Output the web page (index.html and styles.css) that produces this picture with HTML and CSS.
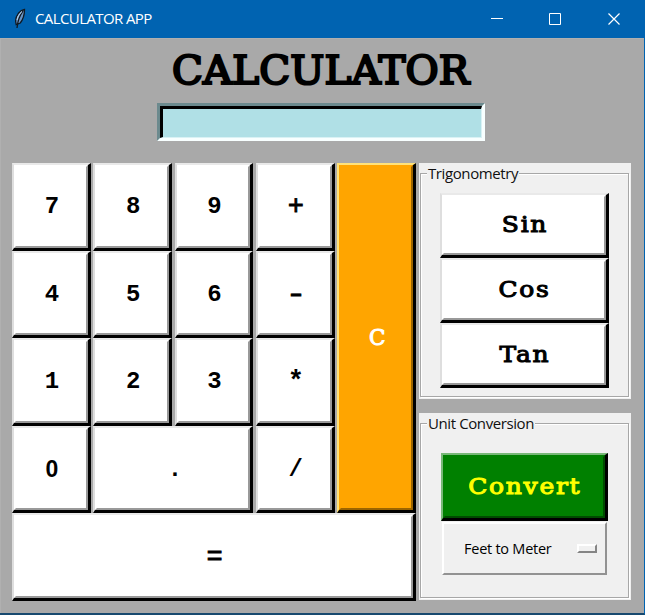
FILE: index.html
```html
<!DOCTYPE html>
<html lang="en">
<head>
<meta charset="utf-8">
<title>CALCULATOR APP</title>
<link rel="stylesheet" href="styles.css">
</head>
<body>
<div class="window">
  <header class="titlebar">
    <svg class="feather" width="14" height="22" viewBox="0 0 14 22"><path d="M11.5 1.5C7 2 3 7 2.6 13L3.2 16.5 7.2 15C10.5 11 11.5 6 11.5 1.5Z" fill="#6793c4" stroke="#101820" stroke-width="1.3"/><path d="M10 3C6.500 8 4.500 13 4 20" fill="none" stroke="#101820" stroke-width="1.300"/><path d="M9 3.500C6 6 4.500 9 4 12" fill="none" stroke="#c3daf0" stroke-width="1"/></svg>
    <span class="caption">CALCULATOR APP</span>
    <svg class="controls" width="130" height="14" viewBox="0 0 130 14" fill="none" stroke="#fff"><path d="M0 6.500H12"/><path d="M58.500 1.500H69.500V12.500H58.500Z"/><path d="M117.500 1.500L128.500 12.500M128.500 1.500L117.500 12.500" stroke-width="1.200"/></svg>
  </header>
  <main class="content">
    <h1 class="title">CALCULATOR</h1>
    <div class="display"><div class="display-inner"></div></div>
    <div class="panels">
      <div class="keys">
        <button class="key">7</button><button class="key">8</button><button class="key">9</button><button class="key sign">+</button><button class="key clear">C</button>
        <button class="key">4</button><button class="key">5</button><button class="key">6</button><button class="key sign"><span class="minus">-</span></button>
        <button class="key">1</button><button class="key">2</button><button class="key">3</button><button class="key star">*</button>
        <button class="key zero">0</button><button class="key wide">.</button><button class="key">/</button>
        <button class="key equals sign">=</button>
      </div>
      <div class="side">
        <section class="frame trig">
          <div class="groove"></div>
          <h2 class="label">Trigonometry</h2>
          <div class="trig-keys">
            <button class="key word"><span class="stretch">Sin</span></button>
            <button class="key word"><span class="stretch">Cos</span></button>
            <button class="key word"><span class="stretch">Tan</span></button>
          </div>
        </section>
        <section class="frame units">
          <div class="groove"></div>
          <h2 class="label unit-label">Unit Conversion</h2>
          <button class="key word convert"><span class="stretch">Convert</span></button>
          <button class="option"><span>Feet to Meter</span><i class="indicator"></i></button>
        </section>
      </div>
    </div>
  </main>
</div>
</body>
</html>
```

FILE: styles.css
```css
* { box-sizing: border-box; }
body { margin: 0; background: #a9a9a9; overflow: hidden; }
button { margin: 0; padding: 0; border-radius: 0; color: #000; }
.window { width: 645px; height: 615px; display: flex; flex-direction: column; background: #a9a9a9; border-right: 1px solid #0063b1; border-bottom: 2px solid #17496f; }
.titlebar { height: 38px; flex: none; margin-right: -1px; background: #0063b1; display: flex; align-items: center; padding-left: 13px; }
.caption { margin: -2px 0 0 8px; font: 15px/20px "Open Sans", sans-serif; letter-spacing: -0.6px; color: #fff; white-space: nowrap; }
.controls { margin-left: auto; margin-right: 24px; }
.content { display: flex; flex-direction: column; flex: 1; border-left: 1px solid #b0b0b0; border-top: 1px solid #b0b0b0; }
.title { align-self: flex-start; margin: 7px 0 0 171px; height: 50px; font: 400 38.5px/50px "DejaVu Serif", serif; letter-spacing: 0.1px; -webkit-text-stroke: 2.2px #000; transform: scaleX(1.05); transform-origin: left; white-space: nowrap; }
.display { width: 328px; height: 38px; margin: 7px 0 0 156px; border: 3px solid; border-color: #6c8a8e #f8ffff #f8ffff #6c8a8e; }
.display-inner { height: 100%; background: #b0e0e6; border: 3px solid; border-width: 3px 1px 1px 3px; border-color: #000 #d9f2f5 #d9f2f5 #000; }
.panels { display: flex; margin: 22px 0 0 11px; }
.keys { width: 404px; height: 438px; display: grid; grid-template-columns: repeat(5, 1fr); grid-template-rows: repeat(5, 1fr); column-gap: 2.6px; }
.key { position: relative; display: flex; align-items: center; justify-content: center; padding: 2px 0 0 2px; background: #fff; border: 2px solid; border-color: #e9e9e9 #000 #000 #dedede; border-width: 2px 3px 3px 2px; font: bold 24px/28px "Liberation Mono", monospace; }
.key::before { content: ""; position: absolute; inset: 0; border: 2px solid; border-color: transparent #999 #999 transparent; }
.clear { grid-column: 5; grid-row: 1 / 5; background: #ffa500; color: #fff; border-color: #ffe27a #000 #000 #ffe27a; }
.clear::before { border-color: transparent #9c6500 #9c6500 transparent; }
.clear, .word { font: 400 21.5px/28px "DejaVu Serif", serif; -webkit-text-stroke: 1px; }
.clear { padding-top: 0; }
.sign { font-weight: 400; font-size: 27px; -webkit-text-stroke: 0.8px; }
.minus { transform: scaleX(1.3); }
.star { font-size: 27px; }
.wide { grid-column: span 2; }
.wide { padding-left: 4px; }
.equals { grid-column: 1 / 6; }
.zero { font-family: "Liberation Sans", sans-serif; font-size: 23px; padding-top: 0; }
.side { width: 212px; margin-left: 3px; }
.frame { position: relative; background: #f0f0f0; display: flex; flex-direction: column; }
.groove { position: absolute; inset: 10px 2px 2px 1px; border: 1px solid #a7a7a7; box-shadow: inset 1px 1px #fff, 1px 1px #fff; }
.label { position: relative; align-self: flex-start; margin: 0 0 0 8px; padding: 0 1px; height: 20px; background: #f0f0f0; font: 400 15px/20px "Open Sans", sans-serif; letter-spacing: -0.4px; color: #111; white-space: nowrap; }
.trig { height: 236px; }
.trig-keys { display: grid; grid-template-rows: repeat(3, 65px); margin: 10px 22px 0 21px; }
.word { padding: 0; }
.stretch { letter-spacing: 1.5px; margin-right: -1.5px; transform: scaleX(1.16); }
.units { height: 187px; margin-top: 14px; }
.convert { width: 167px; height: 68px; margin: 20px 0 0 22px; background: #008000; color: #ff0; border-color: #78b878 #000 #000 #78b878; }
.convert::before { border-color: transparent #004c00 #004c00 transparent; }
.option { width: 165px; height: 53px; margin: 1px 0 0 23px; padding: 0 8px 0 20px; display: flex; align-items: center; justify-content: space-between; background: #f0f0f0; border: 2px solid; border-color: #fff #929292 #929292 #fff; font: 14.5px/20px "Open Sans", sans-serif; letter-spacing: -0.25px; white-space: nowrap; }
.indicator { width: 20px; height: 9px; border: 2px solid; border-color: #fff #858585 #858585 #fff; }
```
